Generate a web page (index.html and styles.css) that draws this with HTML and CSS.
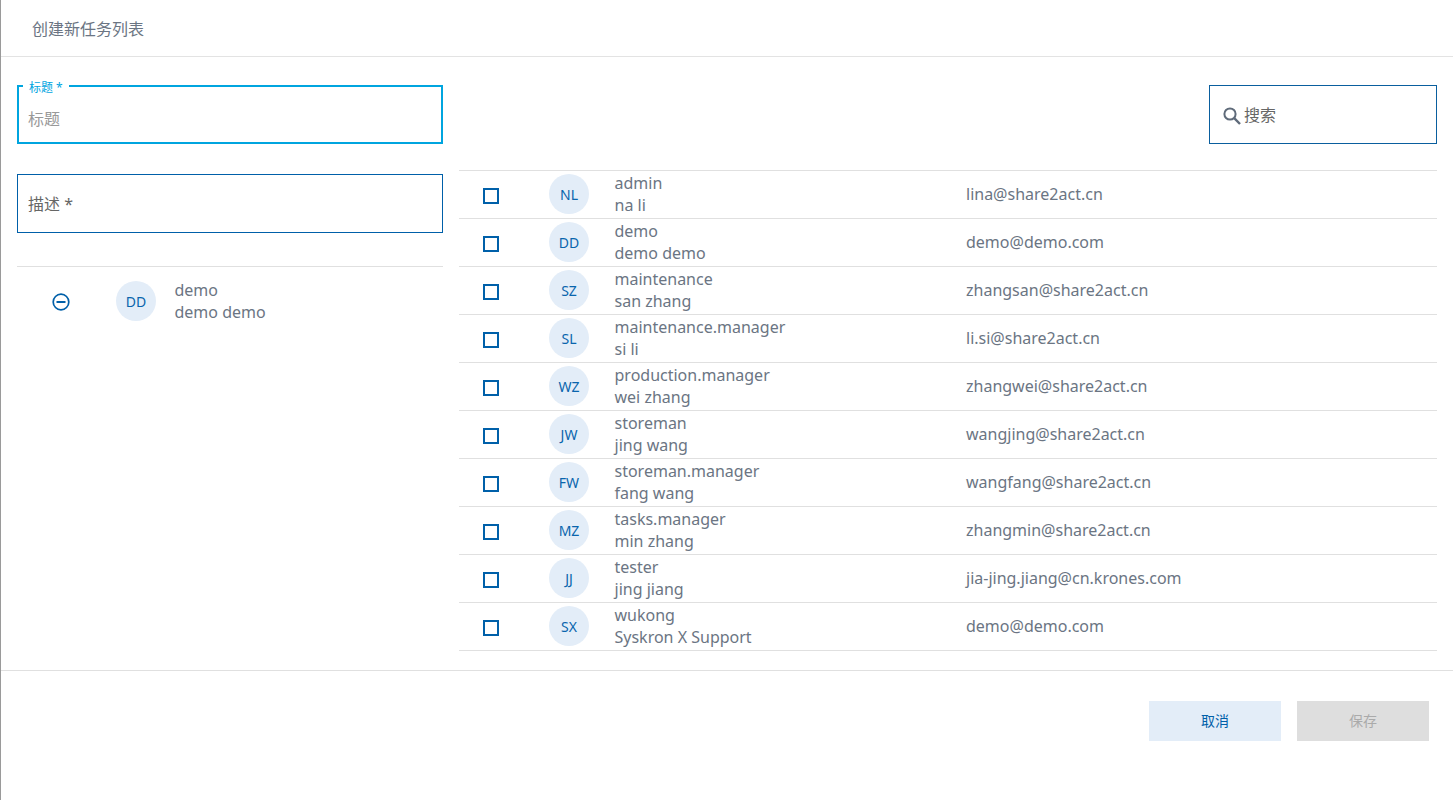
FILE: index.html
```html
<!DOCTYPE html>
<html lang="zh">
<head>
<meta charset="utf-8">
<title>创建新任务列表</title>
<link rel="stylesheet" href="styles.css">
</head>
<body>
<div class="dialog">
  <header class="head">创建新任务列表</header>
  <main class="content">
    <section class="left">
      <div class="field field-focus">
        <span class="float-label">标题 *</span>
        <span class="placeholder">标题</span>
      </div>
      <div class="field field-desc"><span class="desc-label">描述 *</span></div>
      <div class="selected">
        <span class="minus-cell">
          <svg class="minus" width="18" height="18" viewBox="0 0 18 18"><circle cx="9" cy="9" r="7.8" fill="none" stroke="#0060a9" stroke-width="1.7"/><rect x="4.5" y="8" width="9" height="2" fill="#0060a9"/></svg>
        </span>
        <span class="avatar">DD</span>
        <span class="names"><span>demo</span><span>demo demo</span></span>
      </div>
    </section>
    <section class="right">
      <div class="search-row">
        <div class="search">
          <svg width="20" height="20" viewBox="0 0 20 20"><circle cx="8" cy="8" r="5.6" fill="none" stroke="#5f6b7a" stroke-width="2"/><path d="M12.2 12.2 L18 18" stroke="#5f6b7a" stroke-width="2.4" fill="none"/></svg>
          <span>搜索</span>
        </div>
      </div>
      <div class="list">
        <div class="row"><span class="check"></span><span class="avatar">NL</span><span class="names"><span>admin</span><span>na li</span></span><span class="email">lina@share2act.cn</span></div>
        <div class="row"><span class="check"></span><span class="avatar">DD</span><span class="names"><span>demo</span><span>demo demo</span></span><span class="email">demo@demo.com</span></div>
        <div class="row"><span class="check"></span><span class="avatar">SZ</span><span class="names"><span>maintenance</span><span>san zhang</span></span><span class="email">zhangsan@share2act.cn</span></div>
        <div class="row"><span class="check"></span><span class="avatar">SL</span><span class="names"><span>maintenance.manager</span><span>si li</span></span><span class="email">li.si@share2act.cn</span></div>
        <div class="row"><span class="check"></span><span class="avatar">WZ</span><span class="names"><span>production.manager</span><span>wei zhang</span></span><span class="email">zhangwei@share2act.cn</span></div>
        <div class="row"><span class="check"></span><span class="avatar">JW</span><span class="names"><span>storeman</span><span>jing wang</span></span><span class="email">wangjing@share2act.cn</span></div>
        <div class="row"><span class="check"></span><span class="avatar">FW</span><span class="names"><span>storeman.manager</span><span>fang wang</span></span><span class="email">wangfang@share2act.cn</span></div>
        <div class="row"><span class="check"></span><span class="avatar">MZ</span><span class="names"><span>tasks.manager</span><span>min zhang</span></span><span class="email">zhangmin@share2act.cn</span></div>
        <div class="row"><span class="check"></span><span class="avatar">JJ</span><span class="names"><span>tester</span><span>jing jiang</span></span><span class="email">jia-jing.jiang@cn.krones.com</span></div>
        <div class="row"><span class="check"></span><span class="avatar">SX</span><span class="names"><span>wukong</span><span>Syskron X Support</span></span><span class="email">demo@demo.com</span></div>
      </div>
    </section>
  </main>
  <footer class="foot">
    <button class="btn btn-cancel" type="button">取消</button>
    <button class="btn btn-save" type="button" disabled>保存</button>
  </footer>
</div>
</body>
</html>
```
FILE: styles.css
```css
* { box-sizing: border-box; }
html, body { margin: 0; padding: 0; height: 100%; }
body {
  background: #fff;
  font-family: "Noto Sans", "Noto Sans CJK SC", sans-serif;
  color: #6b7583;
  overflow: hidden;
}
.dialog {
  height: 800px;
  border-left: 1px solid #9a9a9a;
  display: flex;
  flex-direction: column;
}
.head {
  height: 57px;
  padding: 18px 0 0 31px;
  font-size: 16px;
  line-height: 22px;
  color: #6b7583;
  border-bottom: 1px solid #e3e3e3;
}
.content {
  height: 614px;
  padding: 28px 16px 0 16px;
  display: flex;
  gap: 16px;
  border-bottom: 1px solid #e0e0e0;
}
.left { width: 426px; flex: none; }
.right { flex: 1; min-width: 0; }
.field {
  position: relative;
  height: 59px;
  padding-left: 11px;
}
.field-focus {
  border: 2px solid #00a5df;
  padding-left: 9px;
  padding-top: 21px;
}
.float-label {
  position: absolute;
  left: 4px;
  top: -7px;
  padding: 0 6px;
  background: #fff;
  font-size: 12px;
  line-height: 16px;
  color: #00a5df;
}
.placeholder {
  display: block;
  font-size: 16px;
  line-height: 22px;
  color: #999;
}
.field-desc {
  margin-top: 30px;
  border: 1px solid #0060a9;
  padding-top: 17px;
  padding-left: 10px;
  margin-bottom: 33px;
}
.desc-label {
  font-size: 16px;
  line-height: 24px;
  color: #666;
  display: block;
}
.selected {
  height: 48px;
  border-top: 1px solid #e0e0e0;
  padding-top: 15px;
  display: flex;
  align-items: flex-start;
}
.selected .avatar { margin-top: -1px; }
.minus-cell {
  width: 99px;
  flex: none;
  padding-left: 35px;
  padding-top: 11px;
  display: block;
  line-height: 0;
}
.selected .names { margin-left: 18.5px; margin-top: -3px; }
.avatar {
  width: 40px;
  height: 40px;
  flex: none;
  border-radius: 50%;
  background: #e3edf8;
  color: #0a65ad;
  font-size: 14px;
  display: flex;
  align-items: center;
  justify-content: center;
}
.names {
  display: flex;
  flex-direction: column;
  font-size: 16px;
  line-height: 22px;
  color: #6b7583;
}
.search-row {
  display: flex;
  justify-content: flex-end;
  align-items: flex-start;
  border-bottom: 1px solid #e0e0e0;
  height: 86px;
}
.search {
  width: 228px;
  height: 59px;
  border: 1px solid #0a5f9e;
  padding: 0 0 0 12px;
  display: flex;
  align-items: center;
  gap: 2px;
  font-size: 16px;
  line-height: 22px;
  color: #666;
}
.search svg { margin-top: 3px; }
.row {
  height: 48px;
  display: flex;
  align-items: center;
  border-bottom: 1px solid #e0e0e0;
}
.check {
  width: 16px;
  height: 16px;
  flex: none;
  margin-left: 24px;
  margin-top: 3px;
  border: 2px solid #0060a9;
  background: #fff;
}
.row .avatar { margin-left: 50px; margin-top: -1px; }
.row .names { margin-left: 25.5px; width: 351.5px; flex: none; margin-top: -1px; }
.email { font-size: 16px; line-height: 22px; color: #6b7583; margin-top: -2px; }
.foot {
  padding: 30px 24px 0 0;
  display: flex;
  justify-content: flex-end;
  gap: 16px;
}
.btn {
  width: 132px;
  height: 40px;
  border: 0;
  padding: 0 0 2px;
  font-family: inherit;
  font-size: 14px;
}
.btn-cancel { background: #e3edf8; color: #0060a9; }
.btn-save { background: #dedede; color: #aaa; }
```
